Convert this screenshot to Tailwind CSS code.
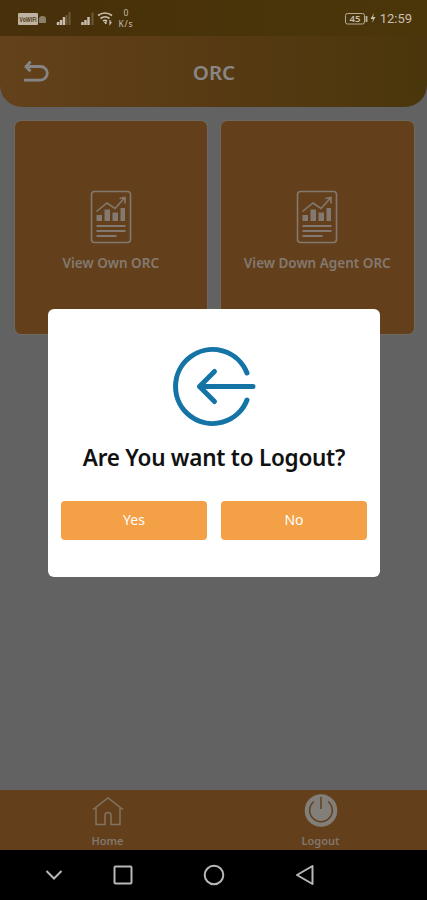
<!DOCTYPE html>
<html lang="en">

<head>
    <meta charset="UTF-8">
    <meta name="viewport" content="width=device-width, initial-scale=1.0">
    <title>ORC</title>
    <script src="https://cdn.jsdelivr.net/npm/@tailwindcss/browser@4"></script>
</head>

<body class="relative flex flex-col h-screen overflow-hidden bg-[#626262] font-['Noto_Sans',sans-serif]">

    <!-- Status bar -->
    <div class="flex items-center justify-between h-9 shrink-0 pl-[18px] pr-[15px] bg-linear-to-r from-[#47300a] to-[#4b360a] text-[#c9bfae]">
        <svg class="w-[120px] h-9" viewBox="18 0 120 36" fill="none">
            <rect x="18" y="13" width="20" height="12" rx="1" fill="#bdb3a0" />
            <text x="19.5" y="21.5" font-size="6.5" font-weight="700" fill="#54401e" textLength="17" lengthAdjust="spacingAndGlyphs">VoWiFi</text>
            <path d="M39 23v-4q0-3 3.500-3t3.500 3v4z" fill="#8d806a" />
            <path d="M58 25v-3M61 25v-5M64 25v-8" stroke="#c9bfae" stroke-width="2.500" />
            <path d="M66.500 25V15M69.500 25V12" stroke="#6d5a36" stroke-width="2" />
            <path d="M82.500 25v-3M85.500 25v-5M88.500 25v-8" stroke="#c9bfae" stroke-width="2.500" />
            <path d="M92.500 25V12.500" stroke="#6d5a36" stroke-width="2" />
            <path d="M98 15.500q7-5 14 0M100.500 18.500q4.500-3.500 9 0M103 21q2-1.500 4 0" stroke="#c9bfae" stroke-width="1.700" />
            <path d="M106 24v-4M104.500 22l1.500 2M110 20v4l1.500-2" stroke="#c9bfae" stroke-width="1.200" />
            <text x="126" y="16" text-anchor="middle" font-size="8.5" fill="#c9bfae">0</text>
            <text x="125.500" y="27" text-anchor="middle" font-size="8.5" fill="#c9bfae" textLength="14">K/s</text>
        </svg>
        <div class="flex items-center">
            <svg class="w-8 h-9" viewBox="345 0 32 36" fill="none">
                <rect x="345.500" y="13.500" width="19" height="10.500" rx="2" stroke="#b5aa96" />
                <path d="M366.500 16v6" stroke="#b5aa96" stroke-width="2" />
                <text x="355" y="22.300" text-anchor="middle" font-size="9.500" font-weight="600" fill="#c9bfae">45</text>
                <path d="M374 13l-3.500 6h2.500l-1 4 3.500-6H373z" fill="#c9bfae" />
            </svg>
            <span class="ml-[3px] pt-0.5 font-['Roboto',sans-serif] text-[13px] leading-9">12:59</span>
        </div>
    </div>

    <!-- Header -->
    <div class="grid grid-cols-[1fr_auto_1fr] items-center h-[71px] shrink-0 px-[23px] rounded-b-[22px] bg-linear-to-r from-[#63411b] via-[#573a13] to-[#4a360c]">
        <svg class="w-[27px] h-6" viewBox="0 0 27 24" fill="none" stroke="#858585" stroke-width="2.800">
            <path d="M7.500 1.500L3 6.800l4.500 4.500" />
            <path d="M2.500 6.500h15a6.800 6.800 0 0 1 0 13.600H1" />
        </svg>
        <h1 class="pt-0.5 pl-px text-[20.500px] leading-[69px] font-semibold text-[#898784]">ORC</h1>
        <span></span>
    </div>

    <!-- Cards -->
    <div class="grid grid-cols-2 gap-3.5 pl-[14.500px] pr-[13.500px] pt-[14px]">
        <div class="flex flex-col items-center h-[213px] pt-[69px] rounded-md bg-[#63401b] ring-1 ring-[#6e6a62]">
            <svg class="w-[42px] h-[54px]" viewBox="0 0 42 54" fill="none" stroke="#837970" stroke-width="1.600">
                <rect x="1.500" y="1.500" width="39" height="51" rx="3" />
                <path d="M6.500 21.500L17 13l8 5.500L34.500 8M29.500 8.500l5.500-1v6" />
                <path d="M6.500 31v-6h5.500v6zM14.500 31V19.500h5.500V31zM22.500 31v-8.500h5.500V31zM30.500 31V18h4.500v13z" fill="#837970" stroke="none" />
                <path d="M6.500 36h29M6.500 41h29M6.500 46h20" stroke-width="1.800" />
            </svg>
            <p class="mt-[9px] text-[13.500px] leading-5 font-semibold whitespace-nowrap text-[#837970]">View Own ORC</p>
        </div>
        <div class="flex flex-col items-center h-[213px] pt-[69px] rounded-md bg-[#63401b] ring-1 ring-[#6e6a62]">
            <svg class="w-[42px] h-[54px]" viewBox="0 0 42 54" fill="none" stroke="#837970" stroke-width="1.600">
                <rect x="1.500" y="1.500" width="39" height="51" rx="3" />
                <path d="M6.500 21.500L17 13l8 5.500L34.500 8M29.500 8.500l5.500-1v6" />
                <path d="M6.500 31v-6h5.500v6zM14.500 31V19.500h5.500V31zM22.500 31v-8.500h5.500V31zM30.500 31V18h4.500v13z" fill="#837970" stroke="none" />
                <path d="M6.500 36h29M6.500 41h29M6.500 46h20" stroke-width="1.800" />
            </svg>
            <p class="mt-[9px] text-[13.500px] leading-5 font-semibold whitespace-nowrap text-[#837970]">View Down Agent ORC</p>
        </div>
    </div>

    <!-- Bottom tabs -->
    <div class="grid grid-cols-2 h-[60px] shrink-0 mt-auto pl-px bg-[#63401b] overflow-hidden">
        <div class="flex flex-col items-center pt-[3px]">
            <svg class="w-9 h-9" viewBox="0 0 36 36" fill="none" stroke="#827462" stroke-width="1.500">
                <path d="M3 16.500L18 5l15 11.500" />
                <path d="M6 14.500v17h9v-9q0-3 3-3t3 3v9h9v-17" />
            </svg>
            <p class="mt-1 text-[11px] leading-4 font-semibold text-[#82766c]">Home</p>
        </div>
        <div class="flex flex-col items-center pt-[3px]">
            <svg class="w-9 h-9" viewBox="0 0 36 36" fill="none">
                <circle cx="18" cy="17.500" r="16.300" fill="#827f7a" />
                <path d="M11 8.500a11.300 11.300 0 1 0 14 0M18 4v12" stroke="#63401b" stroke-width="1.500" />
            </svg>
            <p class="mt-1 text-[11px] leading-4 font-semibold text-[#82766c]">Logout</p>
        </div>
    </div>

    <!-- Android navigation -->
    <div class="h-[50px] shrink-0 bg-black">
        <svg class="w-[427px] h-[50px]" viewBox="0 0 427 50" fill="none" stroke="#b8b8b8" stroke-width="2">
            <path d="M46.500 21l7.500 7.500 7.500-7.500" />
            <rect x="114.500" y="16.500" width="17" height="17" rx="1" />
            <circle cx="214" cy="25" r="9.300" />
            <path d="M312.500 16v18L297 25z" stroke-linejoin="round" />
        </svg>
    </div>

    <!-- Logout dialog -->
    <div class="absolute left-12 top-[308.500px] flex flex-col items-center w-[332px] h-[268px] pt-[37px] px-[13px] rounded-md bg-white">
        <svg class="w-[86px] h-[82px]" viewBox="0 0 86 82" fill="none" stroke="#1474a6" stroke-width="5" stroke-linecap="round" stroke-linejoin="round">
            <path d="M76 27A37 37 0 1 0 76 54" />
            <path d="M82 40.500H28.500M43.500 25.500L28.500 40.500l15 15" />
        </svg>
        <h2 class="mt-3 text-[22.500px] leading-9 font-semibold tracking-[-0.25px] whitespace-nowrap text-[#111]">Are You want to Logout?</h2>
        <div class="grid grid-cols-2 gap-3.5 w-full mt-[25px]">
            <button class="h-[39px] rounded bg-[#f4a046] text-sm text-white">Yes</button>
            <button class="h-[39px] rounded bg-[#f4a046] text-sm text-white">No</button>
        </div>
    </div>

</body>

</html>
